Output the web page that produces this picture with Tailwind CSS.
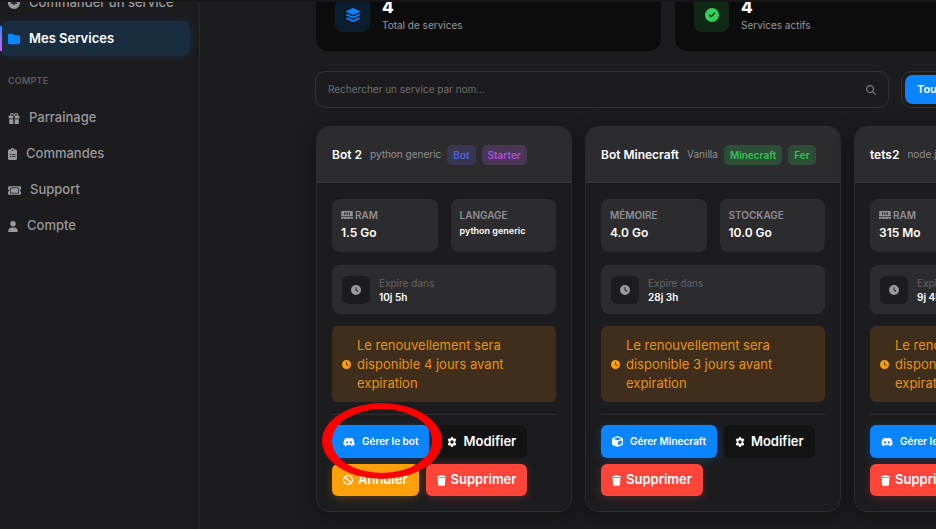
<!DOCTYPE html>
<html lang="fr">

<head>
    <meta charset="UTF-8">
    <meta name="viewport" content="width=device-width, initial-scale=1.0">
    <title>Mes Services</title>
    <script src="https://cdn.jsdelivr.net/npm/@tailwindcss/browser@4"></script>
</head>

<body class="bg-[#1c1c1e] font-['Inter',sans-serif] text-white h-screen overflow-hidden">
    <!-- Icons -->
    <svg class="hidden" fill="currentColor">
        <symbol id="i-plus" viewBox="0 0 512 512">
            <path fill-rule="evenodd" d="M256 512A256 256 0 1 0 256 0a256 256 0 1 0 0 512zM224 320V288H144c-42 0-42-64 0-64H224V144c0-42 64-42 64 0V224H368c42 0 42 64 0 64H288V320c0 42-64 42-64 0z" />
        </symbol>
        <symbol id="i-folder" viewBox="0 0 512 512">
            <path d="M64 480H448c35.3 0 64-28.7 64-64V160c0-35.3-28.7-64-64-64H288c-10.1 0-19.6-4.7-25.6-12.8L243.2 57.6C231.1 41.5 212.1 32 192 32H64C28.7 32 0 60.7 0 96V416c0 35.3 28.7 64 64 64z" />
        </symbol>
        <symbol id="i-gift" viewBox="0 0 512 512">
            <path fill-rule="evenodd" d="M152 0c40 0 75 20 94 54l10 18 10-18c19-34 54-54 94-54 49 0 88 39 88 88 0 14-3 28-10 40h42c18 0 32 14 32 32v64c0 18-14 32-32 32H288V128h-64v128H32c-18 0-32-14-32-32v-64c0-18 14-32 32-32h42c-7-12-10-26-10-40 0-49 39-88 88-88zm0 48c-22 0-40 18-40 40s18 40 40 40h73l-21-50c-10-18-31-30-52-30zm208 0c-21 0-42 12-52 30l-21 50h73c22 0 40-18 40-40s-18-40-40-40zM32 288H224V512H80c-27 0-48-21-48-48zM288 288H480V464c0 27-21 48-48 48H288z" />
        </symbol>
        <symbol id="i-list" viewBox="0 0 384 512">
            <path fill-rule="evenodd" d="M192 0c-42 0-77 27-91 64H64C29 64 0 93 0 128V448c0 35 29 64 64 64H320c35 0 64-29 64-64V128c0-35-29-64-64-64H283C269 27 234 0 192 0zm0 64a32 32 0 1 1 0 64 32 32 0 1 1 0-64zM72 272a24 24 0 1 1 48 0 24 24 0 1 1-48 0zm104-16H304c22 0 22 32 0 32H176c-22 0-22-32 0-32zM72 368a24 24 0 1 1 48 0 24 24 0 1 1-48 0zm88 0c0-9 7-16 16-16H304c22 0 22 32 0 32H176c-9 0-16-7-16-16z" />
        </symbol>
        <symbol id="i-ticket" viewBox="0 0 576 384">
            <path fill-rule="evenodd" d="M64 0C29 0 0 29 0 64v64c0 9 7 16 15 18C34 152 48 170 48 192s-14 40-33 46c-8 2-15 9-15 18v64c0 35 29 64 64 64H512c35 0 64-29 64-64v-64c0-9-7-16-15-18-19-6-33-24-33-46s14-40 33-46c8-2 15-9 15-18V64c0-35-29-64-64-64zM128 64H448c18 0 32 14 32 32V288c0 18-14 32-32 32H128c-18 0-32-14-32-32V96c0-18 14-32 32-32zm0 48V272c0 9 7 16 16 16H432c9 0 16-7 16-16V112c0-9-7-16-16-16H144c-9 0-16 7-16 16z" />
        </symbol>
        <symbol id="i-user" viewBox="0 0 448 512">
            <path d="M224 256A128 128 0 1 0 224 0a128 128 0 1 0 0 256zm-45.7 48C79.8 304 0 383.8 0 482.3C0 498.7 13.3 512 29.7 512H418.3c16.4 0 29.7-13.3 29.7-29.7C448 383.8 368.2 304 269.7 304H178.3z" />
        </symbol>
        <symbol id="i-layers" viewBox="0 0 512 512">
            <path d="M232.5 5.2c14.9-6.9 32.1-6.9 47 0l218.6 101c8.5 3.9 13.9 12.4 13.9 21.8s-5.4 17.9-13.9 21.8l-218.6 101c-14.9 6.9-32.1 6.9-47 0L13.9 149.8C5.4 145.8 0 137.3 0 128s5.4-17.9 13.9-21.8L232.5 5.2zM48.1 218.4l164.3 75.9c27.7 12.8 59.6 12.8 87.3 0l164.3-75.9 34.1 15.8c8.5 3.9 13.9 12.4 13.9 21.8s-5.4 17.9-13.9 21.8l-218.6 101c-14.9 6.9-32.1 6.9-47 0L13.9 277.8C5.4 273.8 0 265.3 0 256s5.4-17.9 13.9-21.8l34.2-15.8zM13.9 362.2l34.2-15.8 164.3 75.9c27.7 12.8 59.6 12.8 87.3 0l164.3-75.9 34.1 15.8c8.5 3.9 13.9 12.4 13.9 21.8s-5.4 17.9-13.9 21.8l-218.6 101c-14.9 6.9-32.1 6.9-47 0L13.9 405.8C5.4 401.8 0 393.3 0 384s5.4-17.9 13.9-21.8z" />
        </symbol>
        <symbol id="i-check" viewBox="0 0 512 512">
            <path d="M256 512A256 256 0 1 0 256 0a256 256 0 1 0 0 512zM369 209L241 337c-9.4 9.4-24.6 9.4-33.9 0l-64-64c-9.4-9.4-9.4-24.6 0-33.9s24.6-9.4 33.9 0l47 47L335 175c9.4-9.4 24.6-9.4 33.9 0s9.4 24.6 0 33.9z" />
        </symbol>
        <symbol id="i-search" viewBox="0 0 512 512">
            <path d="M416 208c0 45.9-14.9 88.3-40 122.7L502.6 457.4c12.5 12.5 12.5 32.8 0 45.3s-32.8 12.5-45.3 0L330.7 376c-34.4 25.2-76.8 40-122.7 40C93.1 416 0 322.9 0 208S93.1 0 208 0S416 93.1 416 208zM208 352a144 144 0 1 0 0-288 144 144 0 1 0 0 288z" />
        </symbol>
        <symbol id="i-memory" viewBox="0 0 576 384">
            <path fill-rule="evenodd" d="M64 0C29 0 0 29 0 64v23c0 7 5 12 11 15 12 6 21 20 21 34s-9 28-21 34C5 173 0 178 0 185v71H576v-71c0-7-5-12-11-15-12-6-21-20-21-34s9-28 21-34c6-3 11-8 11-15V64c0-35-29-64-64-64zM144 96c0-43 64-43 64 0v64c0 43-64 43-64 0zm112 0c0-43 64-43 64 0v64c0 43-64 43-64 0zm112 0c0-43 64-43 64 0v64c0 43-64 43-64 0zM0 288H576v64c0 18-14 32-32 32h-64v-48h-32v48H304v-48h-32v48H128v-48H96v48H32c-18 0-32-14-32-32z" />
        </symbol>
        <symbol id="i-clock" viewBox="0 0 512 512">
            <path d="M256 0a256 256 0 1 1 0 512A256 256 0 1 1 256 0zM232 120V256c0 8 4 15.5 10.7 20l96 64c11 7.4 25.9 4.4 33.3-6.7s4.4-25.9-6.7-33.3L280 243.2V120c0-13.3-10.7-24-24-24s-24 10.7-24 24z" />
        </symbol>
        <symbol id="i-discord" viewBox="0 0 640 512">
            <path fill-rule="evenodd" d="M524 70C486 52 446 39 404 32c-6 10-12 22-16 34-45-7-91-7-136 0-5-12-11-24-17-34-42 7-82 20-120 38C39 183 19 294 29 404c46 34 97 60 151 76 12-16 22-33 31-52-17-6-33-14-49-24l12-10c94 44 198 44 291 0l12 10c-15 10-32 18-49 24 9 19 19 36 31 52 54-16 105-42 151-76 12-128-20-238-86-334zM222 337c-29 0-53-27-53-60s23-60 53-60 54 27 53 60-23 60-53 60zm196 0c-29 0-53-27-53-60s23-60 53-60 54 27 53 60-23 60-53 60z" />
        </symbol>
        <symbol id="i-cube" viewBox="0 0 512 512">
            <path fill-rule="evenodd" d="M235 7c14-5 28-5 42 0l194 71c25 9 41 33 41 60v236c0 27-16 51-41 60l-194 71c-14 5-28 5-42 0L41 434c-25-9-41-33-41-60V138c0-27 16-51 41-60zM256 67L80 131l176 64 176-64zM288 434l160-58V192l-160 58z" />
        </symbol>
        <symbol id="i-gear" viewBox="0 0 512 512">
            <path fill-rule="evenodd" d="M200 20c4-12 14-20 26-20h60c12 0 22 8 26 20l14 52 30 18 53-15c12-3 24 2 30 12l30 52c6 11 4 23-4 32l-39 37v96l39 37c8 9 10 21 4 32l-30 52c-6 10-18 15-30 12l-53-15-30 18-14 52c-4 12-14 20-26 20h-60c-12 0-22-8-26-20l-14-52-30-18-53 15c-12 3-24-2-30-12l-30-52c-6-11-4-23 4-32l39-37v-96l-39-37c-8-9-10-21-4-32l30-52c6-10 18-15 30-12l53 15 30-18zM256 166a90 90 0 1 0 0 180 90 90 0 1 0 0-180z" />
        </symbol>
        <symbol id="i-ban" viewBox="0 0 512 512">
            <path fill-rule="evenodd" d="M256 0a256 256 0 1 1 0 512 256 256 0 1 1 0-512zM145 99L413 367A192 192 0 0 0 145 99zM99 145A192 192 0 0 0 367 413z" />
        </symbol>
        <symbol id="i-trash" viewBox="0 0 448 512">
            <path d="M135.2 17.7L128 32H32C14.3 32 0 46.3 0 64S14.3 96 32 96H416c17.7 0 32-14.3 32-32s-14.3-32-32-32H320l-7.2-14.3C307.4 6.8 296.3 0 284.2 0H163.8c-12.1 0-23.2 6.8-28.6 17.7zM416 128H32L53.2 467c1.6 25.3 22.6 45 47.9 45H346.9c25.3 0 46.3-19.7 47.9-45L416 128z" />
        </symbol>
    </svg>

    <div class="flex h-full border-t-2 border-[#171719]">
        <!-- Sidebar -->
        <aside class="w-[200px] shrink-0 overflow-hidden border-r border-[#2a2a2c] text-[13px] font-medium text-[#98989d]">
            <nav class="-mt-4 flex flex-col gap-0.5 pr-[9px]">
                <a href="#" class="flex items-center gap-[9px] h-[33px] pl-2">
                    <svg class="size-3 fill-current"><use href="#i-plus" /></svg>
                    Commander un service
                </a>
                <a href="#" class="relative flex items-center gap-[9px] h-[35px] pl-2 rounded-lg bg-[#1a2c40] text-white font-semibold shadow-[0_0_8px_#0a84ff26]">
                    <span class="absolute left-0 top-[5px] h-[25px] w-0.5 bg-linear-to-b from-[#0a84ff] to-[#bf5af2]"></span>
                    <svg class="size-3 fill-[#0a84ff]"><use href="#i-folder" /></svg>
                    Mes Services
                </a>
                <h2 class="mt-[15px] mb-2.5 pl-2 text-[9px] leading-4 font-semibold tracking-wide text-[#5d5d61]">COMPTE</h2>
                <a href="#" class="flex items-center gap-[9px] h-[34px] pl-2">
                    <svg class="w-3 h-[11px] fill-current"><use href="#i-gift" /></svg>
                    Parrainage
                </a>
                <a href="#" class="flex items-center gap-[9px] h-[34px] pl-2">
                    <svg class="w-[9px] h-3 fill-current"><use href="#i-list" /></svg>
                    Commandes
                </a>
                <a href="#" class="flex items-center gap-[9px] h-[34px] pl-2">
                    <svg class="w-[13px] h-[9px] fill-current"><use href="#i-ticket" /></svg>
                    Support
                </a>
                <a href="#" class="flex items-center gap-[9px] h-[34px] pl-2">
                    <svg class="w-[10px] h-[11px] fill-current"><use href="#i-user" /></svg>
                    Compte
                </a>
            </nav>
        </aside>

        <!-- Content, wider than the window and scrolled down a little -->
        <main class="flex-1 min-w-0 overflow-hidden pl-[116px]">
            <div class="-mt-6 min-w-[1063px]">
                <!-- Stats -->
                <section class="grid grid-cols-3 gap-[14px]">
                    <div class="flex items-center gap-3 h-[73px] px-[19px] rounded-xl bg-[#0c0c0c]">
                        <span class="flex items-center justify-center size-[35px] rounded-lg bg-[#0b1d2f]">
                            <svg class="size-[14px] fill-[#0a84ff]"><use href="#i-layers" /></svg>
                        </span>
                        <div>
                            <p class="text-[17px] leading-5 font-extrabold">4</p>
                            <p class="text-[10px] leading-4 text-[#98989d]">Total de services</p>
                        </div>
                    </div>
                    <div class="flex items-center gap-3 h-[73px] px-[19px] rounded-xl bg-[#0c0c0c]">
                        <span class="flex items-center justify-center size-[35px] rounded-lg bg-[#112817]">
                            <svg class="size-[14px] fill-[#30d158]"><use href="#i-check" /></svg>
                        </span>
                        <div>
                            <p class="text-[17px] leading-5 font-extrabold">4</p>
                            <p class="text-[10px] leading-4 text-[#98989d]">Services actifs</p>
                        </div>
                    </div>
                    <div class="h-[73px] rounded-xl bg-[#0c0c0c]"></div>
                </section>

                <!-- Search and filters -->
                <section class="mt-5 -ml-px flex gap-3">
                    <label class="flex items-center w-[574px] h-[37px] pl-3 pr-3 rounded-[10px] border border-[#2f2f31]">
                        <input type="search" aria-label="Rechercher un service" placeholder="Rechercher un service par nom..." class="flex-1 bg-transparent text-[10px] outline-none placeholder:text-[#6c6c70]">
                        <svg class="size-[10px] fill-[#7c7c80]"><use href="#i-search" /></svg>
                    </label>
                    <div class="flex flex-1 h-[37px] p-[3px] rounded-[10px] border border-[#2f2f31]">
                        <button class="px-3 rounded-lg bg-[#0a84ff] text-[11px] font-semibold">Tous</button>
                    </div>
                </section>

                <!-- Services -->
                <section class="mt-[18px] grid grid-cols-4 items-start gap-[13px]">
                    <article class="relative rounded-[13px] border border-[#2c2c2e] bg-[#1c1c1e] shadow-[0_5px_20px_#00000050]">
                        <header class="flex items-center h-14 px-[15px] rounded-t-xl border-b border-[#38383a] bg-[#2c2c2e]">
                            <h3 class="text-xs font-semibold">Bot 2</h3>
                            <span class="ml-2 text-[10px] text-[#8e8e93]">python generic</span>
                            <span class="ml-1.5 px-1.5 py-0.5 rounded-[5px] bg-[#5e5ce6]/20 text-[10px] leading-4 font-semibold text-[#5460dc]">Bot</span>
                            <span class="ml-1.5 px-1.5 py-0.5 rounded-[5px] bg-[#bf5af2]/20 text-[10px] leading-4 font-semibold text-[#ad50dc]">Starter</span>
                        </header>
                        <div class="p-[15px] pt-4">
                            <div class="grid grid-cols-2 gap-[13px]">
                                <div class="h-[53px] px-[9px] pt-2 rounded-lg bg-[#2c2c2e]">
                                    <p class="flex items-center gap-0.5 text-[10px] leading-4 font-semibold text-[#8e8e93]">
                                        <svg class="w-3 h-2 fill-current"><use href="#i-memory" /></svg>RAM
                                    </p>
                                    <p class="text-xs leading-5 font-semibold">1.5 Go</p>
                                </div>
                                <div class="h-[53px] px-[9px] pt-2 rounded-lg bg-[#2c2c2e]">
                                    <p class="text-[10px] leading-4 font-semibold text-[#8e8e93]">LANGAGE</p>
                                    <p class="text-[9px] leading-4 font-semibold">python generic</p>
                                </div>
                            </div>
                            <div class="mt-[13px] flex items-center gap-[9px] h-[49px] px-2.5 rounded-lg bg-[#2c2c2e]">
                                <span class="flex items-center justify-center size-7 rounded-md bg-[#1c1c1e]">
                                    <svg class="size-[10px] fill-[#98989d]"><use href="#i-clock" /></svg>
                                </span>
                                <div class="text-[10px]">
                                    <p class="leading-[14px] text-[#636366]">Expire dans</p>
                                    <p class="leading-[14px] font-semibold">10j 5h</p>
                                </div>
                            </div>
                            <div class="mt-3 flex items-center gap-1.5 px-2.5 pt-2.5 pb-[9px] rounded-md bg-[#3e2e1b] text-[13px] leading-[19px] text-[#e9920e]">
                                <svg class="size-[9px] shrink-0 fill-[#ff9f0a]"><use href="#i-clock" /></svg>
                                <p>Le renouvellement sera disponible 4 jours avant expiration</p>
                            </div>
                            <div class="mt-3 flex flex-wrap items-center gap-x-[7px] gap-y-1.5 pt-2.5 border-t border-[#2f2f31] text-[13px] font-semibold">
                                <button class="flex items-center gap-[7px] h-[33px] px-[11px] rounded-md bg-[#0a84ff] text-[10px] shadow-[0_2px_10px_#0a84ff40]">
                                    <svg class="w-3 h-[10px] fill-current"><use href="#i-discord" /></svg>Gérer le bot
                                </button>
                                <button class="flex items-center gap-1.5 h-[33px] px-[11px] rounded-md bg-[#131313]">
                                    <svg class="size-[10px] fill-current"><use href="#i-gear" /></svg>Modifier
                                </button>
                                <button class="flex items-center gap-[5px] h-8 px-[11px] rounded-md bg-[#ff9f0a] shadow-[0_2px_10px_#ff9f0a40]">
                                    <svg class="size-[10px] fill-current"><use href="#i-ban" /></svg>Annuler
                                </button>
                                <button class="flex items-center gap-[5px] h-8 px-[11px] rounded-md bg-[#ff453a] shadow-[0_2px_10px_#ff453a40]">
                                    <svg class="w-[9px] h-[11px] fill-current"><use href="#i-trash" /></svg>Supprimer
                                </button>
                            </div>
                        </div>
                        <!-- Red marker around the manage button -->
                        <svg class="absolute left-[5px] top-[275px] pointer-events-none" width="122" height="78" viewBox="0 0 122 78">
                            <path fill="#f00" fill-rule="evenodd" d="M0 39a60 38 0 1 0 120 0a60 38 0 1 0-120 0zM10 39a50 32 0 1 1 100 0a50 32 0 1 1-100 0z" />
                        </svg>
                    </article>

                    <article class="rounded-[13px] border border-[#2c2c2e] bg-[#1c1c1e] shadow-[0_5px_20px_#00000050]">
                        <header class="flex items-center h-14 px-[15px] rounded-t-xl border-b border-[#38383a] bg-[#2c2c2e]">
                            <h3 class="text-xs font-semibold">Bot Minecraft</h3>
                            <span class="ml-2 text-[10px] text-[#8e8e93]">Vanilla</span>
                            <span class="ml-1.5 px-1.5 py-0.5 rounded-[5px] bg-[#30d158]/20 text-[10px] leading-4 font-semibold text-[#2fc455]">Minecraft</span>
                            <span class="ml-1.5 px-1.5 py-0.5 rounded-[5px] bg-[#30d158]/20 text-[10px] leading-4 font-semibold text-[#2fc455]">Fer</span>
                        </header>
                        <div class="p-[15px] pt-4">
                            <div class="grid grid-cols-2 gap-[13px]">
                                <div class="h-[53px] px-[9px] pt-2 rounded-lg bg-[#2c2c2e]">
                                    <p class="text-[10px] leading-4 font-semibold text-[#8e8e93]">MÉMOIRE</p>
                                    <p class="text-xs leading-5 font-semibold">4.0 Go</p>
                                </div>
                                <div class="h-[53px] px-[9px] pt-2 rounded-lg bg-[#2c2c2e]">
                                    <p class="text-[10px] leading-4 font-semibold text-[#8e8e93]">STOCKAGE</p>
                                    <p class="text-xs leading-5 font-semibold">10.0 Go</p>
                                </div>
                            </div>
                            <div class="mt-[13px] flex items-center gap-[9px] h-[49px] px-2.5 rounded-lg bg-[#2c2c2e]">
                                <span class="flex items-center justify-center size-7 rounded-md bg-[#1c1c1e]">
                                    <svg class="size-[10px] fill-[#98989d]"><use href="#i-clock" /></svg>
                                </span>
                                <div class="text-[10px]">
                                    <p class="leading-[14px] text-[#636366]">Expire dans</p>
                                    <p class="leading-[14px] font-semibold">28j 3h</p>
                                </div>
                            </div>
                            <div class="mt-3 flex items-center gap-1.5 px-2.5 pt-2.5 pb-[9px] rounded-md bg-[#3e2e1b] text-[13px] leading-[19px] text-[#e9920e]">
                                <svg class="size-[9px] shrink-0 fill-[#ff9f0a]"><use href="#i-clock" /></svg>
                                <p>Le renouvellement sera disponible 3 jours avant expiration</p>
                            </div>
                            <div class="mt-3 flex flex-wrap items-center gap-x-[7px] gap-y-1.5 pt-2.5 border-t border-[#2f2f31] text-[13px] font-semibold">
                                <button class="flex items-center gap-[7px] h-[33px] px-[11px] rounded-md bg-[#0a84ff] text-[10px] shadow-[0_2px_10px_#0a84ff40]">
                                    <svg class="size-[11px] fill-current"><use href="#i-cube" /></svg>Gérer Minecraft
                                </button>
                                <button class="flex items-center gap-1.5 h-[33px] px-[11px] rounded-md bg-[#131313]">
                                    <svg class="size-[10px] fill-current"><use href="#i-gear" /></svg>Modifier
                                </button>
                                <button class="flex items-center gap-[5px] h-8 px-[11px] rounded-md bg-[#ff453a] shadow-[0_2px_10px_#ff453a40]">
                                    <svg class="w-[9px] h-[11px] fill-current"><use href="#i-trash" /></svg>Supprimer
                                </button>
                            </div>
                        </div>
                    </article>

                    <article class="rounded-[13px] border border-[#2c2c2e] bg-[#1c1c1e] shadow-[0_5px_20px_#00000050]">
                        <header class="flex items-center h-14 px-[15px] rounded-t-xl border-b border-[#38383a] bg-[#2c2c2e]">
                            <h3 class="text-xs font-semibold">tets2</h3>
                            <span class="ml-2 text-[10px] text-[#8e8e93]">node.js</span>
                        </header>
                        <div class="p-[15px] pt-4">
                            <div class="grid grid-cols-2 gap-[13px]">
                                <div class="h-[53px] px-[9px] pt-2 rounded-lg bg-[#2c2c2e]">
                                    <p class="flex items-center gap-0.5 text-[10px] leading-4 font-semibold text-[#8e8e93]">
                                        <svg class="w-3 h-2 fill-current"><use href="#i-memory" /></svg>RAM
                                    </p>
                                    <p class="text-xs leading-5 font-semibold">315 Mo</p>
                                </div>
                                <div class="h-[53px] rounded-lg bg-[#2c2c2e]"></div>
                            </div>
                            <div class="mt-[13px] flex items-center gap-[9px] h-[49px] px-2.5 rounded-lg bg-[#2c2c2e]">
                                <span class="flex items-center justify-center size-7 rounded-md bg-[#1c1c1e]">
                                    <svg class="size-[10px] fill-[#98989d]"><use href="#i-clock" /></svg>
                                </span>
                                <div class="text-[10px]">
                                    <p class="leading-[14px] text-[#636366]">Expire dans</p>
                                    <p class="leading-[14px] font-semibold">9j 4h</p>
                                </div>
                            </div>
                            <div class="mt-3 flex items-center gap-1.5 px-2.5 pt-2.5 pb-[9px] rounded-md bg-[#3e2e1b] text-[13px] leading-[19px] text-[#e9920e]">
                                <svg class="size-[9px] shrink-0 fill-[#ff9f0a]"><use href="#i-clock" /></svg>
                                <p>Le renouvellement sera disponible 4 jours avant expiration</p>
                            </div>
                            <div class="mt-3 flex flex-wrap items-center gap-x-[7px] gap-y-1.5 pt-2.5 border-t border-[#2f2f31] text-[13px] font-semibold">
                                <button class="flex items-center gap-[7px] h-[33px] px-[11px] rounded-md bg-[#0a84ff] text-[10px] shadow-[0_2px_10px_#0a84ff40]">
                                    <svg class="w-3 h-[10px] fill-current"><use href="#i-discord" /></svg>Gérer le bot
                                </button>
                                <button class="flex items-center gap-1.5 h-[33px] px-[11px] rounded-md bg-[#131313]">
                                    <svg class="size-[10px] fill-current"><use href="#i-gear" /></svg>Modifier
                                </button>
                                <button class="flex items-center gap-[5px] h-8 px-[11px] rounded-md bg-[#ff453a] shadow-[0_2px_10px_#ff453a40]">
                                    <svg class="w-[9px] h-[11px] fill-current"><use href="#i-trash" /></svg>Supprimer
                                </button>
                            </div>
                        </div>
                    </article>
                </section>
            </div>
        </main>
    </div>
</body>

</html>
